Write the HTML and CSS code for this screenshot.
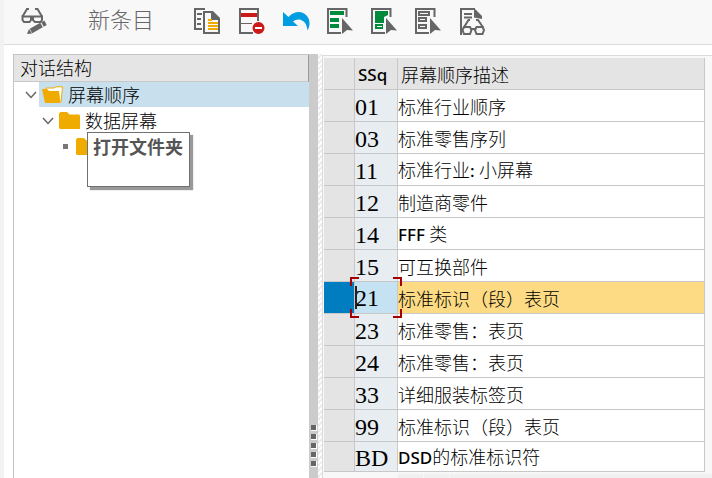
FILE: index.html
```html
<!DOCTYPE html>
<html lang="zh-CN">
<head>
  <meta charset="UTF-8" />
  <meta name="viewport" content="width=device-width, initial-scale=1.0" />
  <title>屏幕顺序</title>
  <link rel="stylesheet" href="styles.css">
</head>
<body>
  <header class="toolbar">
    <button class="tool" type="button" aria-label="显示/更改">
      <svg viewBox="0 0 28 28" fill="none" stroke="#666" stroke-width="2">
        <path d="M9 1H7L2.500 8.500M15 1H17.500L22 8.500"/>
        <path d="M2.500 8.500H11V12L9.500 14H4L2.500 12ZM13 8.500H22V12L20.500 14H15L13 12ZM11 9.500H13"/>
        <path d="M11 23L21.500 17" stroke-width="5"/>
        <path d="M22.500 16.500L25.500 14.800" stroke-width="5"/>
        <path d="M7 26L9 21L12 25.500Z" fill="#666" stroke="none"/>
      </svg>
    </button>
    <button class="new-entries" type="button">新条目</button>
    <div class="tools">
      <button class="tool" type="button" aria-label="复制为">
        <svg viewBox="0 0 28 28" fill="none" stroke="#666" stroke-width="2">
          <path d="M11 1H1V21H8M3 6H8M3 11H7M3 16H7"/>
          <path d="M18 4H10V25H25V11"/>
          <path d="M17 3H19L26 10V12H17Z" fill="#666" stroke="none"/>
          <path d="M14 12H18M14 15H24M14 18H24M14 21H24" stroke="#f0ab00"/>
        </svg>
      </button>
      <button class="tool" type="button" aria-label="删除">
        <svg viewBox="0 0 28 28" fill="none" stroke="#666" stroke-width="2">
          <path d="M15 25H2V1H20V13"/>
          <path d="M2 15.500H14" stroke-width="1"/>
          <path d="M3 7H19" stroke="#cc1919" stroke-width="4"/>
          <circle cx="20.500" cy="20" r="6" fill="#cc1919" stroke="none"/>
          <path d="M17 20H24" stroke="#fff"/>
        </svg>
      </button>
      <button class="tool" type="button" aria-label="撤消更改">
        <svg viewBox="0 0 28 28" fill="#009de0">
          <path d="M1 4L6.500 9C12 3 20 2 25 8C29 13 27.500 19 25.500 22.500C25 17 23 13.500 19 12C16 11 13 12 11 13.500L16 18H1Z"/>
        </svg>
      </button>
      <button class="tool" type="button" aria-label="全选">
        <svg viewBox="0 0 28 28" fill="none" stroke="#666" stroke-width="2">
          <path d="M15 25H2V1H20.500V9"/>
          <path d="M4 5H18M4 12H13M4 18H13" stroke="#008a3b" stroke-width="4"/>
          <path d="M16 10L27 22.500L21 22L16 26Z" fill="#666" stroke="none"/>
        </svg>
      </button>
      <button class="tool" type="button" aria-label="选择块">
        <svg viewBox="0 0 28 28" fill="none" stroke="#666" stroke-width="2">
          <path d="M15 25H2V1H20.500V9"/>
          <path d="M5 3H18V7L14 9V15H5ZM5 16H13V21H5Z" fill="#008a3b" stroke="none"/>
          <path d="M7 18.500H12" stroke="#fff" stroke-width="1"/>
          <path d="M16 10L27 22.500L21 22L16 26Z" fill="#666" stroke="none"/>
        </svg>
      </button>
      <button class="tool" type="button" aria-label="取消全选">
        <svg viewBox="0 0 28 28" fill="none" stroke="#666" stroke-width="2">
          <path d="M15 25H2V1H20.500V9"/>
          <path d="M5 4H15V7H5ZM5 10H12V13H5ZM5 17H12V20H5Z"/>
          <path d="M16 10L27 22.500L21 22L16 26Z" fill="#666" stroke="none"/>
        </svg>
      </button>
      <button class="tool" type="button" aria-label="显示详细信息">
        <svg viewBox="0 0 28 28" fill="none" stroke="#666" stroke-width="2">
          <path d="M3 27V1H17M6 6H14M6 9.500H14"/>
          <path d="M16 0L24 8V11L16 9.500Z" fill="#666" stroke="none"/>
          <path d="M12 12H10.500L5.500 20M18 12H20L25.500 20M13 21H17"/>
          <path d="M6 19H12L13.500 22L12 26H6L4.500 22ZM18.500 19H24.500L26 22L24.500 26H18.500L17 22Z"/>
        </svg>
      </button>
    </div>
  </header>

  <main class="workspace">
    <nav class="structure">
      <h2 class="structure-title">对话结构</h2>
      <ul class="tree">
        <li class="node">
          <svg class="chevron" viewBox="0 0 12 8"><path d="M1 1L6 6.500L11 1"/></svg>
          <div class="node-label selected">
            <svg class="folder" viewBox="0 0 22 18">
              <path d="M4 5V2H12L14 0.800H20.500L19 16" fill="#fff" stroke="#f0ab00"/>
              <path d="M0 3H5L7 5H17L18.500 17H3Z" fill="#f0ab00"/>
            </svg>
            <span>屏幕顺序</span>
          </div>
        </li>
        <li class="node level-2">
          <svg class="chevron" viewBox="0 0 12 8"><path d="M1 1L6 6.500L11 1"/></svg>
          <div class="node-label">
            <svg class="folder" viewBox="0 0 22 18">
              <path d="M0 1.500L1.500 0H8L10.500 2.500H20L21 3.500V17H1L0 16Z" fill="#f0ab00"/>
            </svg>
            <span>数据屏幕</span>
          </div>
        </li>
        <li class="node level-3">
          <span class="leaf"></span>
          <div class="node-label">
            <svg class="folder" viewBox="0 0 22 18">
              <path d="M0 1.500L1.500 0H8L10.500 2.500H20L21 3.500V17H1L0 16Z" fill="#f0ab00"/>
            </svg>
          </div>
          <div class="tooltip" role="tooltip">打开文件夹</div>
        </li>
      </ul>
    </nav>

    <div class="splitter">
      <span class="grip"></span>
      <span class="grip"></span>
      <span class="grip"></span>
      <span class="grip"></span>
      <span class="grip"></span>
    </div>
    <div class="hatch"></div>

    <section class="grid">
      <table class="entries">
        <thead>
          <tr>
            <th class="pick"></th>
            <th class="code"><span class="latin">SSq</span></th>
            <th>屏幕顺序描述</th>
          </tr>
        </thead>
        <tbody>
          <tr><td class="pick"></td><td class="code">01</td><td>标准行业顺序</td></tr>
          <tr><td class="pick"></td><td class="code">03</td><td>标准零售序列</td></tr>
          <tr><td class="pick"></td><td class="code">11</td><td>标准行业<span class="latin">: </span>小屏幕</td></tr>
          <tr><td class="pick"></td><td class="code">12</td><td>制造商零件</td></tr>
          <tr><td class="pick"></td><td class="code">14</td><td><span class="latin">FFF </span>类</td></tr>
          <tr><td class="pick"></td><td class="code">15</td><td>可互换部件</td></tr>
          <tr class="current">
            <td class="pick"></td>
            <td class="code">
              <input class="code-input" type="text" value="21" aria-label="SSq">
              <span class="focus-frame"><i></i><i></i><i></i><i></i></span>
            </td>
            <td>标准标识（段）表页</td>
          </tr>
          <tr><td class="pick"></td><td class="code">23</td><td>标准零售：表页</td></tr>
          <tr><td class="pick"></td><td class="code">24</td><td>标准零售：表页</td></tr>
          <tr><td class="pick"></td><td class="code">33</td><td>详细服装标签页</td></tr>
          <tr><td class="pick"></td><td class="code">99</td><td>标准标识（段）表页</td></tr>
          <tr><td class="pick"></td><td class="code">BD</td><td><span class="latin">DSD</span>的标准标识符</td></tr>
        </tbody>
      </table>
      <div class="scrollbar"><span></span><span></span><span></span></div>
    </section>
  </main>
</body>
</html>
```

FILE: styles.css
```css
* {
  box-sizing: border-box;
}
body {
  margin: 0;
  min-height: 100vh;
  display: flex;
  flex-direction: column;
  border-left: 4px solid #f2f2f2;
  background-color: #fff;
  color: #000;
  font-family: "Noto Sans CJK SC", sans-serif;
  font-size: 18px;
  font-weight: 300;
}
button {
  padding: 0;
  border: none;
  background: none;
  font: inherit;
  cursor: pointer;
}

/* toolbar */
.toolbar {
  display: flex;
  align-items: center;
  gap: 40px;
  height: 45px;
  padding-left: 16px;
  background-color: #f8f8f8;
  border-bottom: 1px solid #dcdcdc;
}
.tools {
  display: flex;
  gap: 16px;
}
.tool,
.tool svg {
  display: block;
  width: 28px;
  height: 28px;
}
.new-entries {
  color: #666;
  font-size: 22px;
  line-height: 36px;
  padding-bottom: 8px;
}

.workspace {
  flex: 1;
  display: flex;
  padding: 9px 0 0 9px;
}

/* dialog structure */
.structure {
  flex: 0 0 296px;
  border-left: 1px solid #c4c4c4;
  border-top: 1px solid #c4c4c4;
}
.structure-title {
  margin: 0;
  height: 27px;
  padding-left: 6px;
  background-color: #e5e5e5;
  border-bottom: 1px solid #c8c8c8;
  border-right: 1px solid #999;
  font-size: 18px;
  font-weight: 300;
  line-height: 25px;
}
.tree {
  list-style: none;
  margin: 0;
  padding: 0;
}
.node {
  position: relative;
  display: flex;
  align-items: center;
  height: 26px;
  padding: 0 0 1px 11px;
}
.level-2 {
  padding-left: 28px;
}
.level-3 {
  padding-left: 45px;
}
.chevron {
  width: 12px;
  height: 8px;
  margin-right: 2px;
  fill: none;
  stroke: #666;
  stroke-width: 1.5;
}
.leaf {
  width: 5px;
  height: 5px;
  margin: 0 5px 0 4px;
  background-color: #777;
}
.node-label {
  flex: 1;
  display: flex;
  align-items: center;
  gap: 4px;
  height: 25px;
  padding-left: 3px;
  line-height: 25px;
}
.selected {
  background-color: #c8e0ed;
}
.folder {
  width: 22px;
  height: 18px;
}
.tooltip {
  position: absolute;
  left: 73px;
  top: -2px;
  width: 103px;
  height: 55px;
  padding-left: 5px;
  background-color: #fff;
  border: 1px solid #707070;
  box-shadow: 3px 3px 1px #999;
  color: #555;
  font-weight: 700;
  line-height: 26px;
}

/* splitter */
.splitter {
  flex: 0 0 9px;
  display: flex;
  flex-direction: column;
  align-items: flex-end;
  justify-content: flex-end;
  gap: 3px;
  padding: 0 1px 11px 0;
  background-color: #cbcbcb;
}
.grip {
  width: 6px;
  height: 6px;
  background-color: #666;
  border: solid #fff;
  border-width: 0 1px 1px 0;
}
.hatch {
  flex: 0 0 4px;
  background: repeating-linear-gradient(135deg, #fff 0 2px, #f0e8f3 2px 4px);
}

/* entries */
.grid {
  flex: 1;
  display: flex;
  flex-direction: column;
  margin-top: 1px;
  padding: 2px 7px 0 1px;
  background-color: #f8f8f8;
  border-top: 1px solid #dcdcdc;
  border-left: 1px solid #dcdcdc;
}
.entries {
  width: 100%;
  border-collapse: separate;
  border-spacing: 0;
  table-layout: fixed;
}
.entries th,
.entries td {
  height: 32px;
  padding: 0;
  background-color: #fff;
  border-right: 1px solid #c8c8c8;
  border-bottom: 1px solid #c8c8c8;
  font-weight: 300;
  line-height: 24px;
  text-align: left;
  white-space: nowrap;
}
.entries th {
  padding-left: 3px;
  background-color: #e4e4e4;
}
.entries .pick {
  width: 31px;
  background-color: #e4e4e4;
}
.entries .code {
  width: 43px;
}
.entries td.code {
  padding-top: 2px;
  background-color: #e8edf1;
  font-family: "Liberation Serif", serif;
  font-size: 24px;
  font-weight: 400;
}
.entries tr:last-child td {
  height: 30px;
}
.latin {
  font-family: "Noto Sans", sans-serif;
  font-size: 17px;
  font-weight: 500;
  white-space: pre;
}
.entries .current td {
  background-color: #fcdb84;
}
.entries .current .pick {
  background-color: #007cc0;
}
.entries .current .code {
  position: relative;
  background-color: #c5e2f2;
}
.code-input {
  display: block;
  width: 100%;
  height: 24px;
  padding: 0;
  border: none;
  outline: none;
  background: none;
  color: inherit;
  font: inherit;
}
/* text cursor */
.entries .current .code::before {
  content: "";
  position: absolute;
  left: 0;
  top: 4px;
  width: 2px;
  height: 23px;
  background-color: #222;
}
.focus-frame {
  position: absolute;
  inset: -5px;
  z-index: 1;
  pointer-events: none;
}
.focus-frame i {
  position: absolute;
  width: 9px;
  height: 9px;
  border: 0 solid #a80000;
}
.focus-frame i:nth-child(1) {
  left: 0;
  top: 0;
  border-width: 2px 0 0 2px;
}
.focus-frame i:nth-child(2) {
  right: 0;
  top: 0;
  border-width: 2px 2px 0 0;
}
.focus-frame i:nth-child(3) {
  left: 0;
  bottom: 0;
  border-width: 0 0 2px 2px;
}
.focus-frame i:nth-child(4) {
  right: 0;
  bottom: 0;
  border-width: 0 2px 2px 0;
}
.scrollbar {
  flex: 1;
  display: flex;
  gap: 1px;
  margin: 2px -7px 0 74px;
}
.scrollbar span {
  width: 25px;
  background-color: #f0f0f0;
}
.scrollbar span:last-child {
  flex: 1;
}
```
